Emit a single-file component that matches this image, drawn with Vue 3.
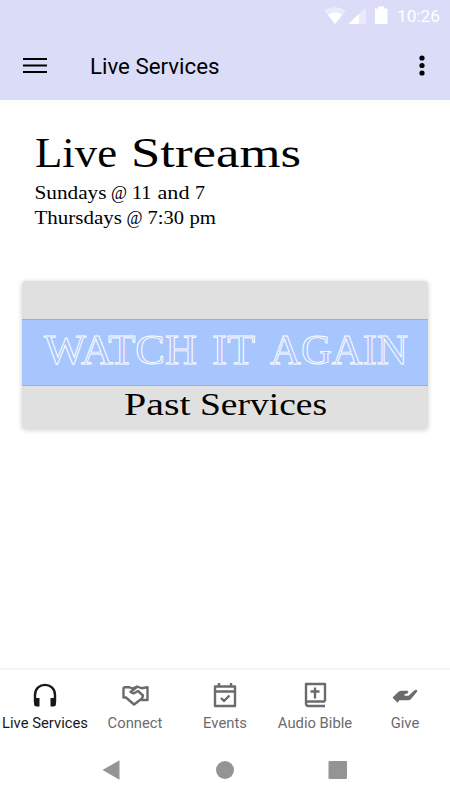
<template>
  <div class="screen">
    <header class="header">
      <div class="status-bar">
        <svg class="status-icons" viewBox="0 0 68 20" fill="#fff" aria-hidden="true">
          <path d="M0 4.5Q11 -2.5 22 4.5L11 18Z" opacity=".4" />
          <path d="M4 9Q11 3.5 18 9L11 18Z" />
          <path d="M24.500 18L42 1V18Z" opacity=".4" />
          <path d="M24.500 18L35 7.800V18Z" />
          <path d="M54 0.500h6v2h3.500v15.500h-12.500v-15.500h3Z" />
        </svg>
        <time>10:26</time>
      </div>
      <div class="toolbar">
        <button class="icon-btn menu-btn" aria-label="Open menu">
          <svg width="24" height="18" viewBox="0 0 24 18">
            <path d="M0 2h24M0 8.500h24M0 15h24" stroke="#000" stroke-width="2.200" />
          </svg>
        </button>
        <h1>Live Services</h1>
        <button class="icon-btn more-btn" aria-label="More options">
          <svg width="6" height="22" viewBox="0 0 6 22">
            <circle cx="3" cy="3" r="2.600" />
            <circle cx="3" cy="10.500" r="2.600" />
            <circle cx="3" cy="18" r="2.600" />
          </svg>
        </button>
      </div>
    </header>

    <main class="content">
      <section class="streams">
        <svg class="lettering" width="450" height="160" viewBox="0 0 450 160">
          <text v-for="line in streamLines" :key="line.y" :y="line.y" :font-size="line.size">
            <tspan
              v-for="word in line.words"
              :key="word.text"
              :x="word.x"
              :textLength="word.width"
              lengthAdjust="spacingAndGlyphs"
            >{{ word.text }}</tspan>
          </text>
        </svg>
      </section>

      <section class="card">
        <div class="band">
          <svg class="lettering" width="406" height="65" viewBox="0 0 406 65">
            <text class="outlined" y="44" font-size="42">
              <tspan
                v-for="word in bannerWords"
                :key="word.text"
                :x="word.x"
                :textLength="word.width"
                lengthAdjust="spacingAndGlyphs"
              >{{ word.text }}</tspan>
            </text>
          </svg>
        </div>
        <svg class="lettering" width="406" height="43" viewBox="0 0 406 43">
          <text y="28.700" font-size="32.500">
            <tspan
              v-for="word in captionWords"
              :key="word.text"
              :x="word.x"
              :textLength="word.width"
              lengthAdjust="spacingAndGlyphs"
            >{{ word.text }}</tspan>
          </text>
        </svg>
      </section>
    </main>

    <nav class="tabs">
      <button
        v-for="tab in tabs"
        :key="tab.name"
        :class="['tab', { active: tab.name === activeTab }]"
        @click="activeTab = tab.name"
      >
        <svg width="30" height="30" viewBox="0 0 30 30">
          <path v-if="tab.line" :d="tab.line" fill="none" stroke="currentColor" stroke-width="2.400" stroke-linejoin="round" />
          <path v-if="tab.fill" :d="tab.fill" fill="currentColor" />
        </svg>
        <span>{{ tab.name }}</span>
      </button>
    </nav>

    <div class="system-nav">
      <svg width="20" height="22" viewBox="0 0 20 22"><path d="M0.500 11L17.500 1.200V20.800Z" /></svg>
      <svg width="20" height="22" viewBox="0 0 20 22"><circle cx="10" cy="11" r="9" /></svg>
      <svg width="20" height="22" viewBox="0 0 20 22"><rect x="0.500" y="2" width="18.500" height="18" rx="1" /></svg>
    </div>
  </div>
</template>

<script setup>
import { ref } from 'vue'

const activeTab = ref('Live Services')

const streamLines = [
  {
    y: 66.5,
    size: 42.5,
    words: [
      { text: 'Live', x: 35, width: 82 },
      { text: 'Streams', x: 131, width: 170 }
    ]
  },
  {
    y: 98.5,
    size: 18.5,
    words: [
      { text: 'Sundays', x: 34.5, width: 72 },
      { text: '@', x: 111, width: 16 },
      { text: '11', x: 132, width: 19.5 },
      { text: 'and', x: 157.5, width: 32 },
      { text: '7', x: 195, width: 10 }
    ]
  },
  {
    y: 123.5,
    size: 18.5,
    words: [
      { text: 'Thursdays', x: 34.5, width: 87.5 },
      { text: '@', x: 126.5, width: 16 },
      { text: '7:30', x: 147.5, width: 36.5 },
      { text: 'pm', x: 189.5, width: 26.5 }
    ]
  }
]

const bannerWords = [
  { text: 'WATCH', x: 22, width: 153 },
  { text: 'IT', x: 190, width: 43 },
  { text: 'AGAIN', x: 248, width: 138 }
]

const captionWords = [
  { text: 'Past', x: 102, width: 66.5 },
  { text: 'Services', x: 178, width: 127 }
]

const tabs = [
  {
    name: 'Live Services',
    line: 'M5 22V15C5 1.500 25 1.500 25 15V22',
    fill: 'M4 18h5.500v8.500H6.500Q4 26.500 4 23.500ZM20.500 18H26v5.500Q26 26.500 23.500 26.500h-3Z'
  },
  {
    name: 'Connect',
    line: 'M3.500 7.200H9L12.500 8.500L17 6.500L21.500 8.200L27.500 7.200V20H21.500M3.500 7.200V17.500H6L14 24.500L22 18.500L23 15.500L18 11L13.500 13.500L10.500 12L17 7'
  },
  {
    name: 'Events',
    line: 'M5 6.500H25V26H5ZM5 11.500H25M9 3V7M21 3V7M11 18L14 21L19.500 15.500'
  },
  {
    name: 'Audio Bible',
    line: 'M25 21.500V4H6V23.500Q6 26 8.500 26H25M6 22.500Q6.500 21.500 8.500 21.500H25M15 7.500V18.500M10.500 11.500H19.500'
  },
  {
    name: 'Give',
    fill: 'M2.500 17.500L8.500 11.800Q10 10.700 12 10.700H17.500Q19.200 12 17.800 13.200L14.500 14.300V15.800H18.500L24.500 10.300Q27.500 9 27.200 11.500L21 19Q20 20.200 18 20.200H9.500L7.500 22.700Z'
  }
]
</script>

<style>
body {
  margin: 0;
  background: #fff;
}
</style>

<style scoped>
.screen {
  display: flex;
  flex-direction: column;
  width: 450px;
  height: 800px;
  overflow: hidden;
  background: #fff;
  font-family: Roboto, sans-serif;
}

svg {
  display: block;
}

button {
  padding: 0;
  border: none;
  background: none;
  font: inherit;
  cursor: pointer;
}

.header {
  height: 100px;
  background: #dbdcf8;
}

.status-bar {
  display: flex;
  align-items: center;
  justify-content: flex-end;
  height: 32px;
  padding-right: 10px;
  gap: 5px;
  color: #fff;
  font-size: 17.3px;
}

.status-icons {
  width: 68px;
  height: 20px;
}

.toolbar {
  display: flex;
  align-items: center;
  height: 67px;
  padding: 0 25px 0 23px;
}

.toolbar h1 {
  flex: 1;
  margin: 0 0 0 43px;
  font-size: 22.3px;
  font-weight: 400;
}

.content {
  flex: 1;
}

.streams {
  height: 160px;
  background: #fefefe;
}

.lettering {
  font-family: "Liberation Serif", serif;
}

.card {
  box-sizing: border-box;
  width: 406px;
  height: 148px;
  margin: 21px 22px 0;
  padding-top: 38px;
  border-radius: 4px;
  background: #e0e0e0;
  box-shadow: 0 1px 5px rgba(0, 0, 0, 0.2);
}

.band {
  border-top: 1px solid #9cb0d6;
  border-bottom: 1px solid #9cb0d6;
  background: #a8c6fe;
}

.outlined {
  fill: #a8c6fe;
  stroke: #fff;
  stroke-width: 0.9px;
}

.tabs {
  display: grid;
  grid-template-columns: repeat(5, 90px);
  box-sizing: border-box;
  height: 72px;
  border-top: 2px solid #f5f5f5;
}

.tab {
  display: flex;
  flex-direction: column;
  align-items: center;
  justify-content: flex-start;
  padding-top: 10px;
  color: #6b6b6d;
  font-size: 14.8px;
  line-height: 17px;
  white-space: nowrap;
}

.tab span {
  margin-top: 4.5px;
}

.tab.active {
  color: #18181a;
}

.system-nav {
  display: flex;
  align-items: center;
  justify-content: center;
  gap: 93px;
  height: 60px;
  fill: #949494;
}
</style>
